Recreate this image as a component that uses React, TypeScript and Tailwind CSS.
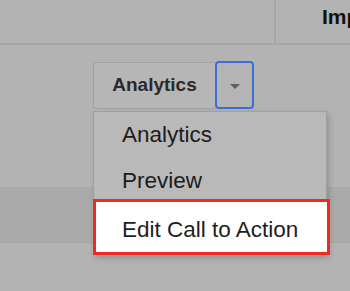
export default function App() {
    const items = ["Analytics", "Preview"];

    return (
        <div className="relative w-[350px] h-[291px] overflow-hidden bg-[#b3b3b3] font-['Liberation_Sans',Arial,sans-serif]">
            {/* table header */}
            <div className="flex h-[45px] border-b-2 border-[#a7a7a7]">
                <div className="w-[276px] shrink-0 border-r-2 border-[#a7a7a7]" />
                <div className="shrink-0 whitespace-nowrap pl-[46px] pt-[6px] text-[21px] leading-[21px] font-bold text-[#111]">Imp</div>
            </div>

            {/* first row with the split button */}
            <div className="h-[142px] pl-[93px] pt-[16px]">
                <div className="relative flex items-start">
                    <div className="mt-[1px] flex h-[47px] w-[122px] items-center justify-center rounded-l-[4px] border border-[#a2a2a2] border-r-0 bg-[#b6b6b6] text-[19px] font-bold text-[#2a2a2a]">
                        Analytics
                    </div>
                    <div className="flex h-[48px] w-[39px] items-center justify-center rounded-[4px] border-2 border-[#3b6fd7] bg-[#b4b4b4]">
                        <span className="mt-[2px] h-0 w-0 border-x-[5px] border-t-[5px] border-x-transparent border-t-[#5f5f5f]" />
                    </div>

                    {/* dropdown menu */}
                    <div className="absolute left-0 top-[50px] w-[234px] h-[144px] border border-[#a0a0a0] bg-[#b9b9b9] shadow-[2px_3px_6px_rgba(0,0,0,0.18)]">
                        {items.map((item) => (
                            <div key={item} className="h-[46px] pl-[28px] text-[22.5px] leading-[46px] text-[#1c1c1c]">
                                {item}
                            </div>
                        ))}
                        <div className="-ml-[1px] -mt-[5px] w-[237px] h-[56px] border-[3px] border-[#ef2a1f] bg-white pl-[26px] pt-[5px] text-[22.5px] leading-[45px] text-[#1e1e1e]">
                            Edit Call to Action
                        </div>
                    </div>
                </div>
            </div>

            {/* second row band */}
            <div className="h-[56px] border-b border-[#a6a6a6] bg-[#aaaaaa]" />
        </div>
    );
}
